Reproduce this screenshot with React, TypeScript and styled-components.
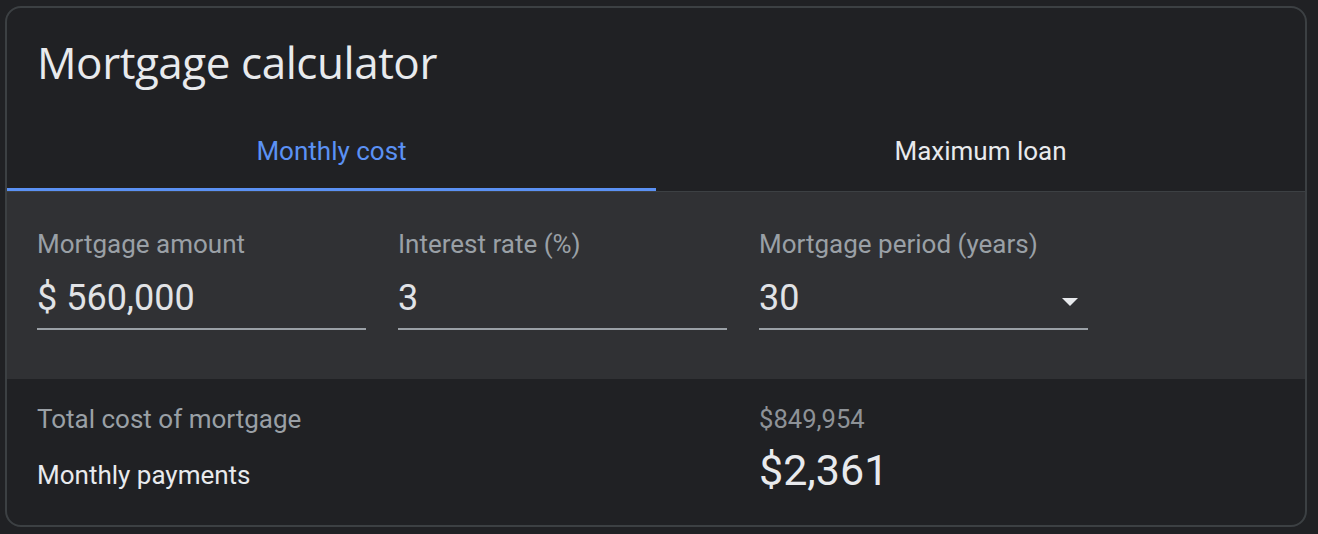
import React, { useState } from 'react';
import styled, { createGlobalStyle } from 'styled-components';

const GlobalStyle = createGlobalStyle`
  body {
    margin: 0;
    background: #202124;
    font-family: Roboto, "Liberation Sans", sans-serif;
  }
`;

const Card = styled.div`
  box-sizing: border-box;
  width: 1302px;
  height: 521px;
  margin: 6px 0 0 5px;
  border: 2px solid #3c4043;
  border-radius: 16px;
  overflow: hidden;
  background: #202124;
  display: flex;
  flex-direction: column;
`;

const Title = styled.h1`
  margin: 0;
  padding: 30px 0 0 30px;
  height: 105px;
  box-sizing: border-box;
  font-family: "Open Sans", Roboto, sans-serif;
  font-weight: 400;
  font-size: 44px;
  line-height: 48px;
  color: #e8eaed;
  letter-spacing: -0.45px;
`;

const TabBar = styled.div`
  display: flex;
  border-bottom: 1px solid #3c4043;
`;

const Tab = styled.div<{ $active?: boolean }>`
  flex: 1;
  height: 78px;
  box-sizing: border-box;
  display: flex;
  align-items: center;
  justify-content: center;
  padding-top: 1px;
  font-size: 26px;
  color: ${p => (p.$active ? '#5b91f4' : '#e8eaed')};
  border-bottom: 3px solid ${p => (p.$active ? '#5b91f4' : 'transparent')};
  cursor: pointer;
`;

const Inputs = styled.div`
  background: #303134;
  height: 187px;
  box-sizing: border-box;
  padding: 33px 0 0 30px;
  display: flex;
  gap: 32px;
`;

const Field = styled.div`
  width: 329px;
  display: flex;
  flex-direction: column;
`;

const Label = styled.div`
  font-size: 26px;
  line-height: 38px;
  color: #9aa0a6;
`;

const ValueRow = styled.div`
  height: 67px;
  box-sizing: border-box;
  display: flex;
  align-items: center;
  justify-content: space-between;
  border-bottom: 2px solid #9aa0a6;
  padding-top: 4px;
  font-size: 36px;
  color: #e1e3e6;
`;

const Arrow = styled.svg`
  width: 16px;
  height: 8px;
  margin-right: 10px;
  margin-top: 8px;
`;

const Results = styled.div`
  flex: 1;
  display: grid;
  grid-template-columns: 722px 1fr;
  grid-template-rows: 56px 56px;
  padding: 12px 0 0 30px;
  align-items: center;
`;

const ResultLabel = styled.div<{ $muted?: boolean }>`
  font-size: 26px;
  color: ${p => (p.$muted ? '#9aa0a6' : '#e8eaed')};
`;

const ResultValue = styled.div<{ $big?: boolean }>`
  font-size: ${p => (p.$big ? '43px' : '25.6px')};
  color: ${p => (p.$big ? '#e8eaed' : '#8e9297')};
  padding-bottom: ${p => (p.$big ? '10px' : '0')};
`;

export default function App() {
  const [tab, setTab] = useState(0);
  return (
    <>
      <GlobalStyle />
      <Card>
        <Title>Mortgage calculator</Title>
        <TabBar>
          <Tab $active={tab === 0} onClick={() => setTab(0)}>Monthly cost</Tab>
          <Tab $active={tab === 1} onClick={() => setTab(1)}>Maximum loan</Tab>
        </TabBar>
        <Inputs>
          <Field>
            <Label>Mortgage amount</Label>
            <ValueRow>$ 560,000</ValueRow>
          </Field>
          <Field>
            <Label>Interest rate (%)</Label>
            <ValueRow>3</ValueRow>
          </Field>
          <Field>
            <Label>Mortgage period (years)</Label>
            <ValueRow>
              30
              <Arrow viewBox="0 0 16 8">
                <path d="M0 0h16l-8 8z" fill="#e8eaed" />
              </Arrow>
            </ValueRow>
          </Field>
        </Inputs>
        <Results>
          <ResultLabel $muted>Total cost of mortgage</ResultLabel>
          <ResultValue>$849,954</ResultValue>
          <ResultLabel>Monthly payments</ResultLabel>
          <ResultValue $big>$2,361</ResultValue>
        </Results>
      </Card>
    </>
  );
}
